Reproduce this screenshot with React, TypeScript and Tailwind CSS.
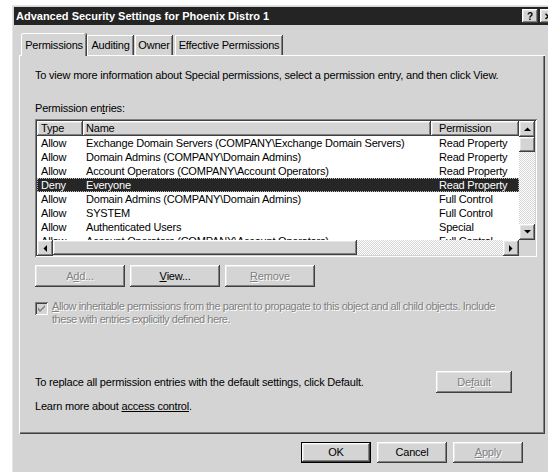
import React from "react";

const raised =
  "shadow-[inset_-1px_-1px_0_#404040,inset_1px_1px_0_#ffffff,inset_-2px_-2px_0_#808080,inset_2px_2px_0_#e6e6e6]";
const sunken =
  "shadow-[inset_1px_1px_0_#808080,inset_-1px_-1px_0_#ffffff,inset_2px_2px_0_#404040,inset_-2px_-2px_0_#d4d4d4]";
const grayText = "text-[#808080] [text-shadow:1px_1px_0_#ffffff]";

type Row = { type: string; name: string; perm: string; selected?: boolean };

const rows: Row[] = [
  { type: "Allow", name: "Exchange Domain Servers (COMPANY\\Exchange Domain Servers)", perm: "Read Property" },
  { type: "Allow", name: "Domain Admins (COMPANY\\Domain Admins)", perm: "Read Property" },
  { type: "Allow", name: "Account Operators (COMPANY\\Account Operators)", perm: "Read Property" },
  { type: "Deny", name: "Everyone", perm: "Read Property", selected: true },
  { type: "Allow", name: "Domain Admins (COMPANY\\Domain Admins)", perm: "Full Control" },
  { type: "Allow", name: "SYSTEM", perm: "Full Control" },
  { type: "Allow", name: "Authenticated Users", perm: "Special" },
  { type: "Allow", name: "Account Operators (COMPANY\\Account Operators)", perm: "Full Control" },
];

function Button({
  children,
  disabled,
  isDefault,
  className = "",
}: {
  children: React.ReactNode;
  disabled?: boolean;
  isDefault?: boolean;
  className?: string;
}) {
  return (
    <div
      className={`flex items-center justify-center bg-[#d4d4d4] ${
        isDefault ? "border border-black" : ""
      } ${className}`}
    >
      <div className={`flex h-full w-full items-center justify-center ${raised} ${disabled ? grayText : "text-black"}`}>
        {children}
      </div>
    </div>
  );
}

function Arrow({ dir }: { dir: "up" | "down" | "left" | "right" }) {
  const pts = {
    up: "0,4 7,4 3.5,0.5",
    down: "0,0 7,0 3.5,3.5",
    left: "4,0 4,7 0.5,3.5",
    right: "0,0 0,7 3.5,3.5",
  }[dir];
  const vertical = dir === "up" || dir === "down";
  return (
    <div className={`flex h-[16px] w-[16px] shrink-0 items-center justify-center bg-[#d4d4d4] ${raised}`}>
      <svg width={vertical ? 7 : 4} height={vertical ? 4 : 7} viewBox={vertical ? "0 0 7 4" : "0 0 4 7"}>
        <polygon points={pts} fill="#000" />
      </svg>
    </div>
  );
}

function PermissionList() {
  return (
    <div className={`mt-[4px] h-[138px] w-[502px] bg-white p-[2px] ${sunken}`}>
      <div className="flex h-full">
        <div className="flex w-[482px] flex-col">
          {/* column headers */}
          <div className="flex h-[15px] shrink-0">
            <div className={`flex w-[46px] items-center bg-[#d4d4d4] pl-[4px] ${raised}`}>Type</div>
            <div className={`flex w-[348px] items-center bg-[#d4d4d4] pl-[3px] ${raised}`}>Name</div>
            <div className={`flex w-[88px] items-center bg-[#d4d4d4] pl-[8px] ${raised}`}>Permission</div>
          </div>
          <div className="h-[104px] overflow-hidden">
            {rows.map((r, i) => (
              <div
                key={i}
                className={`flex h-[14px] items-center ${
                  r.selected
                    ? "bg-[#262626] text-white outline outline-1 outline-dotted outline-offset-[-1px] outline-[#bbbbbb]"
                    : ""
                }`}
              >
                <div className="w-[46px] pl-[4px]">{r.type}</div>
                <div className="w-[348px] whitespace-nowrap pl-[3px]">{r.name}</div>
                <div className="w-[88px] whitespace-nowrap pl-[8px]">{r.perm}</div>
              </div>
            ))}
          </div>
          {/* horizontal scrollbar */}
          <div className="flex h-[15px] shrink-0 bg-[repeating-conic-gradient(#ffffff_0%_25%,#d4d4d4_0%_50%)] bg-size-[2px_2px]">
            <Arrow dir="left" />
            <div className={`h-full w-[304px] bg-[#d4d4d4] ${raised}`} />
            <div className="flex-1" />
            <Arrow dir="right" />
          </div>
        </div>
        {/* vertical scrollbar */}
        <div className="flex w-[16px] flex-col">
          <div className="flex flex-1 flex-col bg-[repeating-conic-gradient(#ffffff_0%_25%,#d4d4d4_0%_50%)] bg-size-[2px_2px]">
            <Arrow dir="up" />
            <div className={`h-[15px] w-[16px] bg-[#d4d4d4] ${raised}`} />
            <div className="flex-1" />
            <Arrow dir="down" />
          </div>
          <div className="h-[15px] bg-[#d4d4d4]" />
        </div>
      </div>
    </div>
  );
}

export default function App() {
  return (
    <div className="h-[472px] w-[548px] overflow-hidden bg-white pl-[11px] pt-[4px] font-['Liberation_Sans',Arial,sans-serif] text-[11px] leading-[13px] tracking-[-0.2px] text-black">
      <div className={`h-[500px] w-[548px] bg-[#d4d4d4] p-[3px] ${raised}`}>
        {/* title bar */}
        <div className="flex h-[18px] items-center bg-[#242424] pl-[2px]">
          <span className="flex-1 text-[11px] font-bold tracking-normal text-white">
            Advanced Security Settings for Phoenix Distro 1
          </span>
          <div className={`flex h-[14px] w-[16px] items-center justify-center bg-[#d4d4d4] text-[10px] font-bold ${raised}`}>?</div>
          <div className={`ml-[2px] flex h-[14px] w-[16px] items-center justify-center bg-[#d4d4d4] text-[10px] font-bold ${raised}`}>✕</div>
        </div>

        <div className="ml-[5px] w-[526px]">
          {/* tabs */}
          <div className="mt-[8px] flex h-[22px] items-end pl-[2px]">
            <div className="relative z-10 -mb-px flex h-[23px] w-[65px] items-center justify-center rounded-t-[2px] border-l border-t border-white bg-[#d4d4d4] shadow-[1px_0_0_#404040,inset_-1px_0_0_#808080]">
              Permissions
            </div>
            <div className="ml-px flex h-[20px] w-[46px] items-center justify-center border-l border-t border-white bg-[#d4d4d4] shadow-[1px_0_0_#404040,inset_-1px_0_0_#808080]">
              Auditing
            </div>
            <div className="ml-[2px] flex h-[20px] w-[37px] items-center justify-center border-l border-t border-white bg-[#d4d4d4] shadow-[1px_0_0_#404040,inset_-1px_0_0_#808080]">
              Owner
            </div>
            <div className="ml-[3px] flex h-[20px] w-[107px] items-center justify-center border-l border-t border-white bg-[#d4d4d4] shadow-[1px_0_0_#404040,inset_-1px_0_0_#808080]">
              Effective Permissions
            </div>
          </div>

          {/* tab page */}
          <div className="h-[379px] border-l border-t border-white pl-[15px] pt-[13px] shadow-[inset_-1px_-1px_0_#404040,inset_-2px_-2px_0_#808080]">
            <p>To view more information about Special permissions, select a permission entry, and then click View.</p>
            <p className="mt-[20px]">
              Permission en<span className="underline">t</span>ries:
            </p>
            <PermissionList />

            <div className="mt-[8px] flex gap-[5px]">
              <Button disabled className="h-[22px] w-[90px]">
                A<span className="underline">d</span>d...
              </Button>
              <Button className="h-[22px] w-[90px]">
                <span className="underline">V</span>iew...
              </Button>
              <Button disabled className="h-[22px] w-[90px]">
                <span className="underline">R</span>emove
              </Button>
            </div>

            <div className="mt-[13px] flex items-start gap-[4px]">
              <div className={`mt-[2px] flex h-[13px] w-[13px] shrink-0 items-center justify-center bg-[#d4d4d4] ${sunken}`}>
                <svg width="7" height="7" viewBox="0 0 7 7">
                  <path d="M0 2 L0 5 L2 7 L7 2 L7 0 L2 5 Z" fill="#808080" />
                </svg>
              </div>
              <p className={`w-[456px] tracking-[-0.45px] ${grayText}`}>
                <span className="underline">A</span>llow inheritable permissions from the parent to propagate to this object and all child objects. Include
                these with entries explicitly defined here.
              </p>
            </div>

            <div className="mt-[45px] flex items-center">
              <p className="w-[401px]">To replace all permission entries with the default settings, click Default.</p>
              <Button disabled className="h-[22px] w-[76px]">
                De<span className="underline">f</span>ault
              </Button>
            </div>

            <p className="mt-[7px]">
              Learn more about <span className="underline">access control</span>.
            </p>
          </div>

          {/* dialog buttons */}
          <div className="mt-[8px] flex justify-end gap-[6px] pr-[22px]">
            <Button isDefault className="h-[21px] w-[70px]">OK</Button>
            <Button className="h-[21px] w-[70px]">Cancel</Button>
            <Button disabled className="h-[21px] w-[70px]">
              <span className="underline">A</span>pply
            </Button>
          </div>
        </div>
      </div>
    </div>
  );
}
